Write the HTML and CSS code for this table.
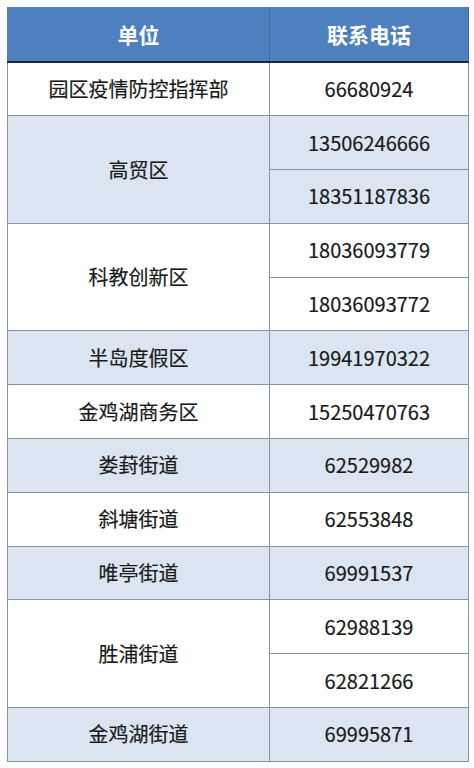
FILE: index.html
```html
<!DOCTYPE html>
<html lang="zh-CN">
<head>
<meta charset="utf-8">
<link rel="stylesheet" href="styles.css">
</head>
<body>
<table class="contacts">
  <colgroup><col class="col-unit"><col class="col-phone"></colgroup>
  <thead>
    <tr class="head"><th>单位</th><th>联系电话</th></tr>
  </thead>
  <tbody>
    <tr class="w"><td>园区疫情防控指挥部</td><td>66680924</td></tr>
    <tr class="b"><td rowspan="2">高贸区</td><td>13506246666</td></tr>
    <tr class="b"><td>18351187836</td></tr>
    <tr class="w"><td rowspan="2">科教创新区</td><td>18036093779</td></tr>
    <tr class="w"><td>18036093772</td></tr>
    <tr class="b"><td>半岛度假区</td><td>19941970322</td></tr>
    <tr class="w"><td>金鸡湖商务区</td><td>15250470763</td></tr>
    <tr class="b"><td>娄葑街道</td><td>62529982</td></tr>
    <tr class="w"><td>斜塘街道</td><td>62553848</td></tr>
    <tr class="b"><td>唯亭街道</td><td>69991537</td></tr>
    <tr class="w"><td rowspan="2">胜浦街道</td><td>62988139</td></tr>
    <tr class="w"><td>62821266</td></tr>
    <tr class="b"><td>金鸡湖街道</td><td>69995871</td></tr>
  </tbody>
</table>
</body>
</html>
```
FILE: styles.css
```css
html, body {
  margin: 0;
  padding: 0;
  background: #ffffff;
}
body {
  padding: 7px;
  font-family: "Noto Sans CJK SC", "Noto Sans", sans-serif;
}
.contacts {
  border-collapse: collapse;
  table-layout: fixed;
  width: 461px;
  border: 1.5px solid #8694a6;
}
.col-unit { width: 262px; }
.col-phone { width: 199px; }
.contacts th,
.contacts td {
  height: 52.8px;
  padding: 0;
  text-align: center;
  vertical-align: middle;
  border: 1px solid #8694a6;
  font-size: 20px;
  color: #1a1a1a;
  line-height: 1;
  -webkit-text-stroke: 0.2px #1a1a1a;
}
.head th {
  height: 52.5px;
  background: #4e7fbe;
  color: #ffffff;
  -webkit-text-stroke: 0;
  font-weight: bold;
  font-size: 21px;
  border-color: #4e7fbe #3f6aa3 #1d2a3e #4e7fbe;
  border-bottom: 2px solid #1d2a3e;
}
.head th:first-child { border-right: 1px solid #3f6aa3; }
.w td { background: #ffffff; }
.b td { background: #dbe5f1; }
```
